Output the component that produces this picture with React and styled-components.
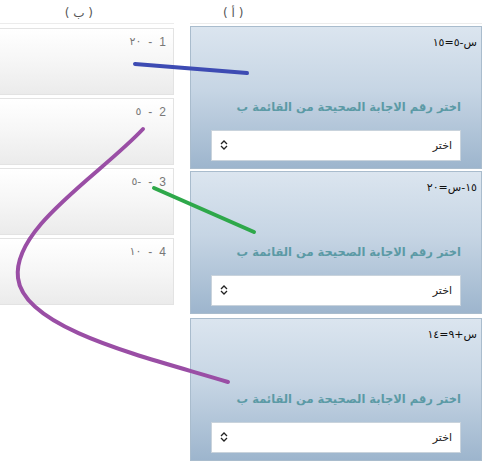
import React from "react";
import styled, { createGlobalStyle } from "styled-components";

const Global = createGlobalStyle`
  html, body { margin: 0; padding: 0; background: #fff; overflow: hidden; }
  body { font-family: "DejaVu Sans", sans-serif; }
`;

const Page = styled.div`
  position: relative;
  direction: rtl;
  width: 486px;
  height: 468px;
  overflow: hidden;
`;

const Columns = styled.div`
  display: flex;
  flex-direction: row;
  gap: 16px;
  padding-right: 4px;
`;

const Column = styled.div`
  display: flex;
  flex-direction: column;
  flex: 0 0 ${(p) => p.$w}px;
  gap: ${(p) => p.$gap}px;
`;

const Header = styled.div`
  height: 24px;
  box-sizing: border-box;
  border-bottom: 1px solid #ececec;
  margin-bottom: ${(p) => p.$mb}px;
  font-family: "DejaVu Sans", sans-serif;
  font-size: 12px;
  color: #555;
  line-height: 22px;
  padding-top: 2px;
  text-align: ${(p) => p.$align};
  padding-right: ${(p) => p.$pr || 0}px;
  padding-left: ${(p) => p.$pl || 0}px;
  white-space: pre;
`;

const Panel = styled.div`
  height: 143px;
  box-sizing: border-box;
  border: 1px solid #a9bccd;
  background: linear-gradient(to bottom, #dbe5ef 0%, #c6d5e4 45%, #9db5cd 100%);
  display: flex;
  flex-direction: column;
  padding: 4px 4px 7px 20px;
  margin-top: ${(p) => p.$mt || 0}px;
`;

const Question = styled.div`
  height: 60px;
  text-align: right;
`;

const Equation = styled.span`
  direction: ltr;
  unicode-bidi: bidi-override;
  font-size: 11px;
  color: #111;
  line-height: 14px;
`;

const Instruction = styled.div`
  font-size: 11.5px;
  font-weight: bold;
  color: #5b9aa5;
  line-height: 16px;
  white-space: nowrap;
  padding-right: 16px;
  margin-top: 11px;
  margin-bottom: 15px;
`;

const Select = styled.div`
  height: 33px;
  margin-right: 16px;
  box-sizing: border-box;
  background: #fff;
  border: 1px solid #c9d3dc;
  display: flex;
  align-items: center;
  justify-content: space-between;
  padding: 0 8px 0 8px;
  font-size: 11px;
  color: #222;
`;

const Chevron = styled.svg`
  width: 8px;
  height: 10px;
  display: block;
`;

const Card = styled.div`
  height: 67px;
  box-sizing: border-box;
  border: 1px solid #e3e3e3;
  background: linear-gradient(to bottom, #ffffff 0%, #f6f6f6 50%, #ebebeb 100%);
  padding: 5px 7px 0 0;
  display: flex;
  align-items: flex-start;
  gap: 7px;
  font-family: "Liberation Sans", "DejaVu Sans", sans-serif;
  font-size: 12px;
  line-height: 16px;
  color: #777;
`;

const Value = styled.span`
  direction: ltr;
  unicode-bidi: bidi-override;
  font-family: "DejaVu Sans", sans-serif;
  font-size: 11px;
`;

const Lines = styled.svg`
  position: absolute;
  left: 0;
  top: 0;
  pointer-events: none;
`;

/* equations written in their visual (left-to-right) order */
const questions = ["١٥=٥-س", "٢٠=س-١٥", "١٤=٩+س"];
/* values in visual order */
const answers = [
  ["1", "٢٠"],
  ["2", "٥"],
  ["3", "٥-"],
  ["4", "١٠"],
];

export default function App() {
  return (
    <Page>
      <Global />
      <Columns>
        <Column $w={292} $gap={2}>
          <Header $align="left" $pl={33} $mb={0}>( أ )</Header>
          {questions.map((q, i) => (
            <Panel key={i} $mt={i === 2 ? 2 : 0}>
              <Question>
                <Equation>{q}</Equation>
              </Question>
              <Instruction>اختر رقم الاجابة الصحيحة من القائمة ب</Instruction>
              <Select>
                <span>اختر</span>
                <Chevron viewBox="0 0 8 10">
                  <path d="M1 4 L4 1 L7 4 M1 6 L4 9 L7 6" fill="none" stroke="#222" strokeWidth="1.3" />
                </Chevron>
              </Select>
            </Panel>
          ))}
        </Column>
        <Column $w={260} $gap={3}>
          <Header $align="right" $pr={81} $mb={1}>( ب )</Header>
          {answers.map(([n, v], i) => (
            <Card key={i}>
              <span>{n}</span>
              <span>-</span>
              <Value>{v}</Value>
            </Card>
          ))}
        </Column>
      </Columns>
      <Lines width="486" height="468" viewBox="0 0 486 468">
        <path d="M135 64 L247 73" stroke="#3d4bb3" strokeWidth="4" strokeLinecap="round" fill="none" />
        <path d="M154 188 L254 232" stroke="#2ea84a" strokeWidth="4" strokeLinecap="round" fill="none" />
        <path d="M143 129 C 100 175 12 228 18 278 C 24 330 150 358 228 382" stroke="#9a4ea5" strokeWidth="4" strokeLinecap="round" fill="none" />
      </Lines>
    </Page>
  );
}
